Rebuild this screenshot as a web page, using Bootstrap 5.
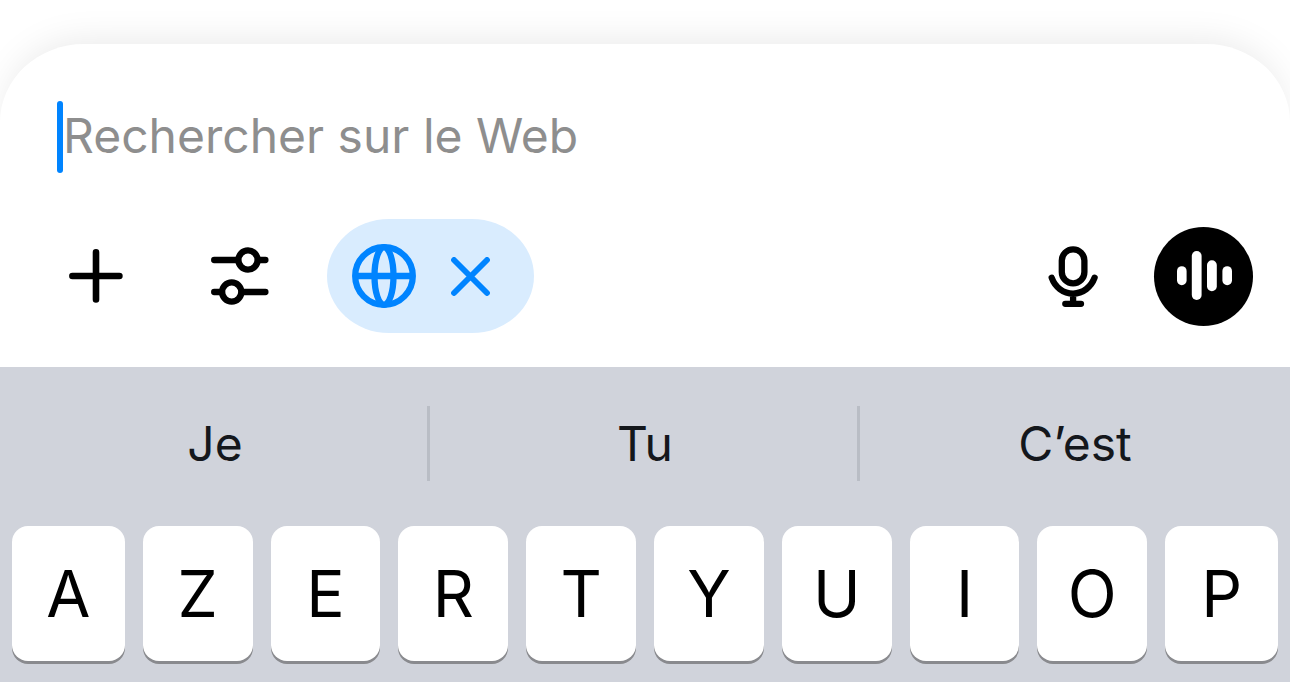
<!DOCTYPE html>
<html lang="fr">
<head>
<meta charset="utf-8">
<meta name="viewport" content="width=device-width, initial-scale=1">
<title>Rechercher sur le Web</title>
<link href="https://cdn.jsdelivr.net/npm/bootstrap@5.3.0/dist/css/bootstrap.min.css" rel="stylesheet">
<style>
  body { font-family: Inter, "Liberation Sans", sans-serif; background: #fff; color: #000; overflow-x: hidden; }
  button { color: inherit; }
  svg { display: block; }
  .composer { margin-top: 44px; padding: 57px 37px 34px 57px; background: #fff; border-radius: 84px 84px 0 0 / 78px 78px 0 0; box-shadow: 0 -10px 38px -10px rgba(0, 0, 0, .1); }
  .caret { width: 6px; height: 72px; border-radius: 3px; background: #0084ff; }
  .prompt { height: 70px; font-size: 48px; line-height: 70px; caret-color: transparent; outline: 0; }
  .prompt::placeholder { color: #8e8e8e; opacity: 1; }
  .tools { margin-top: 46px; padding-left: 7px; }
  .icon-btn { width: 64px; height: 64px; }
  .tools-left { gap: 80px; }
  .tools-right { gap: 49px; }
  .web-chip { gap: 35px; height: 114px; margin-left: 55px; padding: 0 44px 0 25px; border-radius: 62px / 57px; background: #d9ecfe; color: #0084ff; }
  .voice-btn { width: 99px; height: 99px; background: #000; color: #fff; }
  .keyboard { background: #d0d3db; }
  .suggestions { padding: 39px 0 45px; }
  .suggestion { height: 75px; font-size: 48px; line-height: 75px; color: #14171c; }
  .suggestion:not(:last-child) { box-shadow: inset -3px 0 0 #b9bdc5; }
  .key-row { display: grid; grid-template-columns: 113fr repeat(8, 110fr) 113fr; gap: 18px; padding: 0 12px 21px; }
  .key-cap { height: 135px; border-radius: 16px; background: #fff; font-size: 64px; line-height: 135px; box-shadow: 0 3px 0 #898a8e; }
</style>
</head>
<body>
<div class="d-flex flex-column min-vh-100">
  <main class="composer">
    <div class="d-flex align-items-start">
      <span class="caret flex-shrink-0"></span>
      <input class="prompt border-0 p-0 flex-grow-1 bg-transparent" type="text" placeholder="Rechercher sur le Web" aria-label="Rechercher sur le Web">
    </div>
    <div class="tools d-flex justify-content-between align-items-center">
      <div class="d-flex align-items-center">
        <div class="tools-left d-flex">
          <button type="button" class="icon-btn border-0 bg-transparent p-0" aria-label="Ajouter">
            <svg width="64" height="64" viewBox="0 0 64 64" fill="none" stroke="currentColor" stroke-width="6.6" stroke-linecap="round"><path d="M32 8.4V55.4M8.4 32H55.4"/></svg>
          </button>
          <button type="button" class="icon-btn border-0 bg-transparent p-0" aria-label="Outils">
            <svg width="64" height="64" viewBox="0 0 64 64" fill="none" stroke="currentColor" stroke-width="6.3" stroke-linecap="round"><path d="M6.2 16H30M50 16H57.4M6.2 48H14M34 48H57.4"/><circle cx="40" cy="16" r="9.6"/><circle cx="23.7" cy="48" r="9.6"/></svg>
          </button>
        </div>
        <div class="web-chip d-flex align-items-center">
          <button type="button" class="border-0 bg-transparent p-0" aria-label="Web">
            <svg width="64" height="64" viewBox="0 0 64 64" fill="none" stroke="currentColor" stroke-width="6.3"><circle cx="32" cy="32" r="28.8"/><ellipse cx="32" cy="32" rx="9.5" ry="28.8"/><path d="M3 32H61"/></svg>
          </button>
          <button type="button" class="border-0 bg-transparent p-0" aria-label="Fermer">
            <svg width="39" height="39" viewBox="0 0 39 39" fill="none" stroke="currentColor" stroke-width="5.8" stroke-linecap="round"><path d="M3 3L36 36M36 3L3 36"/></svg>
          </button>
        </div>
      </div>
      <div class="tools-right d-flex align-items-center">
        <button type="button" class="icon-btn border-0 bg-transparent p-0" aria-label="Dicter">
          <svg width="64" height="64" viewBox="0 0 64 64" fill="none" stroke="currentColor" stroke-width="6.3" stroke-linecap="round"><rect x="20.8" y="5.3" width="22.6" height="34" rx="11.3"/><path d="M10.7 33.7C14 43 22.3 49.6 32.1 49.6S50.2 43 53.6 33.7M32.1 50V59M24.3 59.8H40"/></svg>
        </button>
        <button type="button" class="voice-btn rounded-circle border-0 p-0" aria-label="Mode vocal">
          <svg width="99" height="99" viewBox="0 0 99 99" fill="currentColor"><rect x="23" y="39.2" width="9.6" height="19" rx="4.8"/><rect x="37.8" y="24" width="9.8" height="49" rx="4.9"/><rect x="53" y="33.2" width="9.8" height="31" rx="4.9"/><rect x="68.4" y="39.2" width="9.6" height="19" rx="4.8"/></svg>
        </button>
      </div>
    </div>
  </main>
  <section class="keyboard flex-grow-1" aria-label="Clavier">
    <div class="suggestions d-flex">
      <button type="button" class="suggestion col border-0 bg-transparent p-0">Je</button>
      <button type="button" class="suggestion col border-0 bg-transparent p-0">Tu</button>
      <button type="button" class="suggestion col border-0 bg-transparent p-0">C’est</button>
    </div>
    <div class="key-row">
      <button type="button" class="key-cap border-0 p-0">A</button>
      <button type="button" class="key-cap border-0 p-0">Z</button>
      <button type="button" class="key-cap border-0 p-0">E</button>
      <button type="button" class="key-cap border-0 p-0">R</button>
      <button type="button" class="key-cap border-0 p-0">T</button>
      <button type="button" class="key-cap border-0 p-0">Y</button>
      <button type="button" class="key-cap border-0 p-0">U</button>
      <button type="button" class="key-cap border-0 p-0">I</button>
      <button type="button" class="key-cap border-0 p-0">O</button>
      <button type="button" class="key-cap border-0 p-0">P</button>
    </div>
  </section>
</div>
<script src="https://cdn.jsdelivr.net/npm/bootstrap@5.3.0/dist/js/bootstrap.bundle.min.js"></script>
</body>
</html>
